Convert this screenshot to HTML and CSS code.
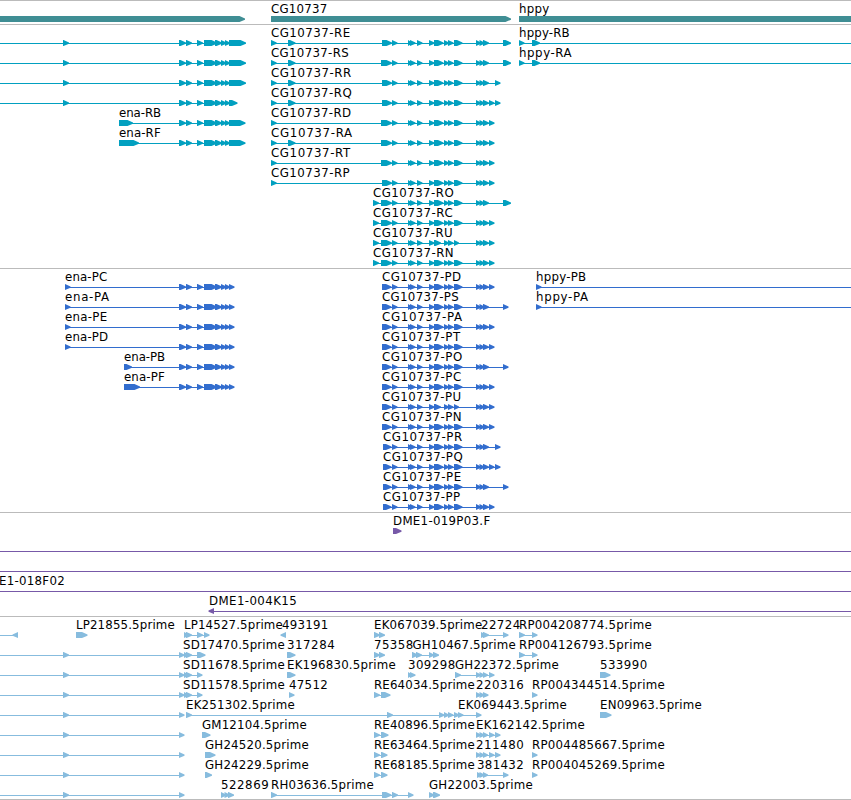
FILE: index.html
```html
<!DOCTYPE html>
<html lang="en">
<head>
<meta charset="utf-8">
<title>Genome region</title>
<link rel="stylesheet" href="styles.css">
</head>
<body>
<main class="browser" id="browser"></main>
<script src="tracks.js"></script>
</body>
</html>
```
FILE: styles.css
```css
body {
  margin: 0;
  background: #fff;
}
.browser {
  display: flex;
  flex-direction: column;
  width: 851px;
  height: 800px;
  overflow: hidden;
}
.track {
  border-top: 1px solid #bbb;
  padding-top: 3px;
}
.track:last-child {
  border-bottom: 1px solid #bbb;
}
.row {
  display: block;
  width: 851px;
  height: 20px;
  overflow: visible;
}
.track:last-child .row:last-child {
  margin-bottom: -1px;
}
.row text {
  font-family: "DejaVu Sans", sans-serif;
  font-size: 11.8px;
  fill: #000;
}
.gene { color: #3f8e94; }
.transcript { color: #02a0c0; }
.protein { color: #326dce; }
.bac { color: #7759a8; }
.est { color: #87bcde; }
.row path,
.row rect {
  fill: currentColor;
}
```
FILE: tracks.js
```js
// Row: { l: [[text, left, right]], s: [[lineStart, lineEnd]], e: [[start, end]], r: [[start, end]] }
// e = features pointing right, r = features pointing left.
const tail = [[392,397.5],[408,412],[410,415.5],[417,422.5],[429,434.5],[434,443.5],[444,449],[448,453.5],[454,462.5],[476,481],[479.5,484.5],[483,489]];
const shortTail = tail.map(e => e[0] === 454 ? [454,459] : e[0] === 434 ? [434,441] : e);
const D = [489,494.5], R = [495,500.5], L = [503,511], M = [503,508.5];

function isoform(name, x, end, starts, last, body) {
  const e = [...starts, ...(body || tail), ...last];
  return { l: [[name, x, end]], s: [[e[0][0], e[e.length - 1][1] - 1]], e };
}
function merge(...rows) {
  const out = { l: [], s: [], e: [], r: [] };
  rows.forEach(o => Object.keys(out).forEach(k => out[k].push(...(o[k] || []))));
  return out;
}

const mid = [[179,186],[186,192],[197,203],[204,217],[215,222],[221,226.5],[225,230]];
const enaR = end => ({ s: [[0,230]], e: [[63,69],...mid,[229,end]] });
const enaP = (name, x, end, first) => ({ l: [[name, x, end]], s: [[x,230]], e: [first,...mid,[229,234.5]] });
const hppyR = (n, end) => ({ l: [[n,520,end]], s: [[519,851]], e: [[519,524.5],[532,540]] });
const hppyP = (n, end) => ({ l: [[n,537,end]], s: [[536,851]], e: [[536,541.5]] });
const a = [271,276.7], b = [288,295.5], c2 = [382,392], c1 = [381,392], k = [373,379];
const p2 = [382,391.5], p3 = [383,391.5];
const lead = { s: [[0,183]], e: [[63,69],[179,184.5]] };
const est = (name, x, end, e, line) => ({ l: [[name, x, end]], s: line ? [[e[0][0], e[e.length - 1][1] - 1]] : [], e });

const tracks = [
  { kind: "gene", rows: [
    { l: [["CG10737",272,327],["hppy",520,549]], e: [[-10,245],[271,511],[519,870]] }
  ]},
  { kind: "transcript", rows: [
    merge(enaR(246), isoform("CG10737-RE",272,350,[a,b,c2],[L]), hppyR("hppy-RB",569.5)),
    merge(enaR(246), isoform("CG10737-RS",272,348.5,[a,b,c1],[L]), hppyR("hppy-RA",571.5)),
    merge(enaR(246), isoform("CG10737-RR",272,351,[a,b,c2],[R])),
    merge(enaR(237.5), isoform("CG10737-RQ",272,351.5,[a,b,c2],[D,R])),
    merge({ l: [["ena-RB",120,161]], s: [[119,230]], e: [[119,133],...mid,[229,245.5]] }, isoform("CG10737-RD",272,351,[a,c1],[D])),
    merge({ l: [["ena-RF",120,160.5]], s: [[119,230]], e: [[119,139],...mid,[229,245.5]] }, isoform("CG10737-RA",272,352,[a,b,c1],[D])),
    isoform("CG10737-RT",272,350,[a,c1],[D]),
    isoform("CG10737-RP",272,349.5,[a,c2],[D]),
    isoform("CG10737-RO",374,453.5,[k,c1],[L]),
    isoform("CG10737-RC",374,452.5,[k,c1],[D]),
    isoform("CG10737-RU",374,452.5,[k,c1],[D],shortTail),
    isoform("CG10737-RN",374,453.5,[k,c1],[D])
  ]},
  { kind: "protein", rows: [
    merge(enaP("ena-PC",66,107,[65,70.5]), isoform("CG10737-PD",383,461,[p2],[D]), hppyP("hppy-PB",586)),
    merge(enaP("ena-PA",66,109,[65,70.5]), isoform("CG10737-PS",383,458.5,[p2],[M]), hppyP("hppy-PA",588)),
    merge(enaP("ena-PE",66,107,[65,70.5]), isoform("CG10737-PA",383,462,[p2],[D])),
    merge(enaP("ena-PD",66,108,[65,70.5]), isoform("CG10737-PT",383,460,[p2],[D])),
    merge(enaP("ena-PB",125,165,[124,132]), isoform("CG10737-PO",383,462,[p2],[M])),
    merge(enaP("ena-PF",125,164.5,[124,140]), isoform("CG10737-PC",383,461,[p2],[D])),
    isoform("CG10737-PU",383,461,[p2],[D],shortTail),
    isoform("CG10737-PN",383,461.5,[p2],[D]),
    isoform("CG10737-PR",384,462,[p3],[R]),
    isoform("CG10737-PQ",384,462.5,[p3],[D,R]),
    isoform("CG10737-PE",384,461,[p3],[M]),
    isoform("CG10737-PP",384,460,[p3],[D])
  ]},
  { kind: "bac", rows: [
    { l: [["DME1-019P03.F",394,490]], e: [[393,401.5]] },
    { s: [[0,851]] },
    { s: [[0,851]] },
    { l: [["E1-018F02",0,64.5]], s: [[0,851]] },
    { l: [["DME1-004K15",210,296.5]], s: [[213,851]], r: [[208.5,214]] }
  ]},
  { kind: "est", rows: [
    merge({ s: [[0,14]], r: [[12.5,18]] },
      est("LP21855.5prime",77,174.5,[[76,87.5]]),
      est("LP14527.5prime",185,282.5,[[184,189],[186,192],[197,203],[204,209.5]],1),
      { l: [["493191",283,328]], r: [[280.5,286]] },
      est("EK067039.5prime",375,482,[[374,380],[379,385]]),
      est("22724",482,520,[[481,486],[483,489],[503,508.5]],1),
      est("RP004208774.5prime",520,651.5,[[519,525],[532,537.5]],1)),
    merge(lead, est("SD17470.5prime",184,284.5,[[184,189],[186,192],[197,205.5]],1),
      est("317284",288,334.5,[[287,295.5]]),
      est("75358",375,413,[[374,380],[379,385]]),
      est("GH10467.5prime",413.5,515.5,[[412,418],[416,422],[429,434],[433,439]],1),
      est("RP004126793.5prime",520,651.5,[[519,525],[532,537.5]],1)),
    merge(lead, est("SD11678.5prime",184,284.5,[[184,189],[186,192],[197,202.5]],1),
      est("EK196830.5prime",288,395.5,[[287,295.5]]),
      est("309298",409,455,[[408,412],[410,415.5]]),
      est("GH22372.5prime",456,558.5,[[455,461],[476,481],[479.5,484.5],[483,488],[489,494.5]],1),
      est("533990",601,647,[[600,610.5]])),
    merge(lead, est("SD11578.5prime",184,284.5,[[184,189],[186,192],[197,202.5]],1),
      est("47512",290,327.5,[[289,294.5]]),
      est("RE64034.5prime",375,474.5,[[374,380],[381,390.5]],1),
      est("220316",477,523.5,[[476,481],[479.5,484.5],[483,488.5]]),
      est("RP004344514.5prime",533,664.5,[[532,537.5]])),
    merge(lead,
      est("EK251302.5prime",187,294.5,[[186,192],[387,393],[439,444.5],[444,449],[448,453.5],[454,459.5],[458,463.5],[476,481.5]],1),
      { l: [["EK069443.5prime",459,566.5]] },
      est("EN09963.5prime",601,701.5,[[600,611.5]])),
    merge(lead, est("GM12104.5prime",203,306.5,[[202,210.5]]),
      est("RE40896.5prime",375,474.5,[[374,380],[381,388.5]],1),
      est("EK162142.5prime",477,584.5,[[476,481],[479.5,484.5],[483,488],[489,494.5],[495,500.5]],1)),
    merge(lead, est("GH24520.5prime",206,308.5,[[205,215.5]]),
      est("RE63464.5prime",375,474.5,[[374,380],[381,387.5]],1),
      est("211480",477,523.5,[[476,481],[479.5,484.5],[483,488],[489,494.5],[495,500.5]],1),
      est("RP004485667.5prime",533,664.5,[[532,537.5]])),
    merge(lead, est("GH24229.5prime",206,308.5,[[205,212]]),
      est("RE68185.5prime",375,474.5,[[374,380],[381,387.5]],1),
      est("381432",478,523.5,[[477,482],[479.5,484.5],[483,488],[503,508.5]],1),
      est("RP004045269.5prime",533,664.5,[[532,537.5]])),
    merge(lead, est("522869",222,268.5,[[221,226],[224.5,230],[228,234]]),
      est("RH03636.5prime",272,373.5,[[271,277],[382,391.5],[392,398],[408,413.5]],1),
      est("GH22003.5prime",430,532.5,[[429,434.5],[433,440]]))
  ]}
];

function rightArrow([x, end]) {
  const neck = Math.max(x, end - 5.5);
  return `<path d="M${x} 12H${neck}L${end} 14.5V15.7L${neck} 18H${x}Z"/>`;
}
function leftArrow([x, end]) {
  return `<path d="M${end} 12V18L${x} 15.7V14.5Z"/>`;
}
function drawRow({ l = [], s = [], e = [], r = [] }) {
  return `<svg class="row" viewBox="0 0 851 20">` +
    s.map(([x, end]) => `<rect x="${x}" y="15" width="${end - x}" height="1"/>`).join("") +
    e.map(rightArrow).join("") + r.map(leftArrow).join("") +
    l.map(([t, x, end]) => `<text x="${x - 1}" y="9" textLength="${end - x + 1.2}">${t}</text>`).join("") +
    `</svg>`;
}
document.getElementById("browser").innerHTML = tracks.map(t =>
  `<section class="track ${t.kind}">${t.rows.map(drawRow).join("")}</section>`).join("");
```
